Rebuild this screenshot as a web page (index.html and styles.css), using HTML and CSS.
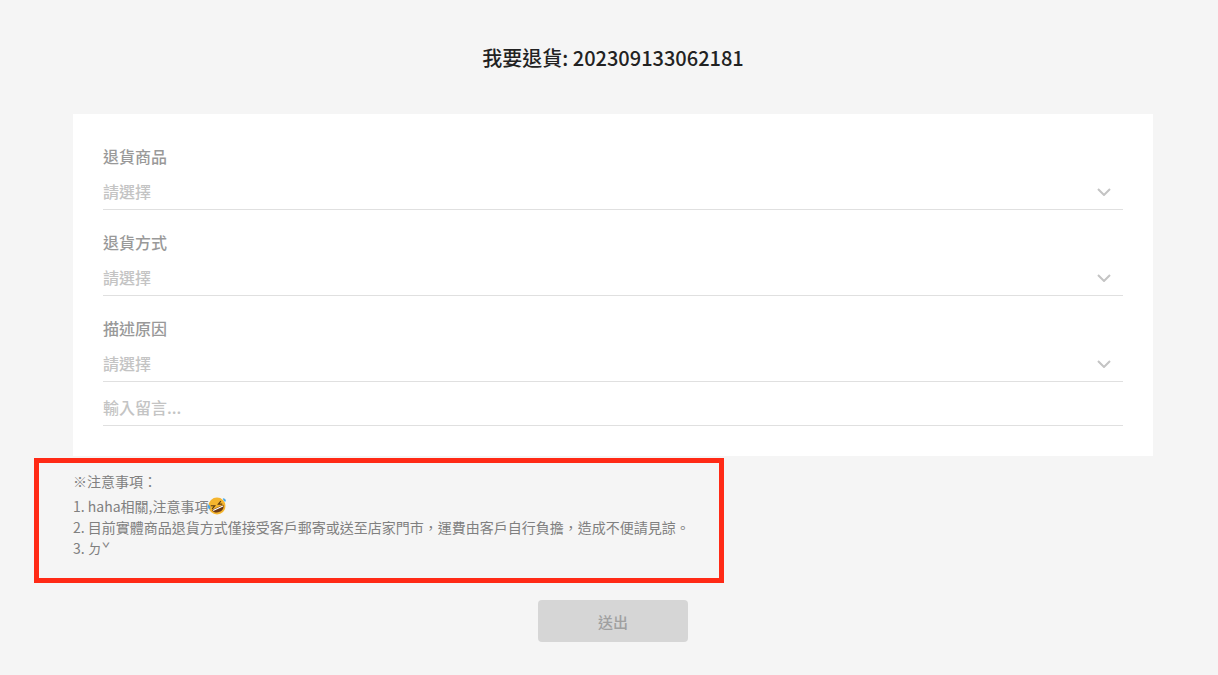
FILE: index.html
```html
<!DOCTYPE html>
<html lang="zh-TW">
<head>
    <meta charset="UTF-8">
    <meta name="viewport" content="width=device-width, initial-scale=1.0">
    <title>我要退貨</title>
    <link rel="stylesheet" href="styles.css">
</head>
<body>
    <div class="page">
        <h1 class="title">我要退貨: 202309133062181</h1>

        <form class="card">
            <div class="field">
                <div class="field-label">退貨商品</div>
                <div class="select">
                    <span>請選擇</span>
                    <svg class="chevron" viewBox="0 0 14 8"><path d="M1 1l6 6 6-6"/></svg>
                </div>
            </div>
            <div class="field">
                <div class="field-label">退貨方式</div>
                <div class="select">
                    <span>請選擇</span>
                    <svg class="chevron" viewBox="0 0 14 8"><path d="M1 1l6 6 6-6"/></svg>
                </div>
            </div>
            <div class="field">
                <div class="field-label">描述原因</div>
                <div class="select">
                    <span>請選擇</span>
                    <svg class="chevron" viewBox="0 0 14 8"><path d="M1 1l6 6 6-6"/></svg>
                </div>
            </div>
            <div class="message">輸入留言...</div>
        </form>

        <div class="notes">
            <div class="notes-title">※注意事項：</div>
            <div class="notes-line">1. haha相關,注意事項<svg class="emoji" viewBox="0 0 20 20">
                <circle cx="10" cy="10" r="9.400" fill="#f5b52e"/>
                <g transform="rotate(-25 10 10)">
                    <path d="M3.800 6.800l4 2-4 1.800M16.200 6.800l-4 2 4 1.800" fill="none" stroke="#5a3a12" stroke-width="1.300"/>
                    <path d="M3 11.600h14c-.5 3.600-3.400 5.600-7 5.600s-6.500-2-7-5.600z" fill="#6b3a16"/>
                    <path d="M4 12.100h12v1.300H4z" fill="#fff"/>
                </g>
                <path d="M.5 8c-1 2.500-.8 5 1 5.500 1.800 0 1.600-3-1-5.500zM16.500 1.500c2.500.2 3.800 1.800 3.200 3.300-1.200 1.200-3-.6-3.200-3.300z" fill="#4aa8e8"/>
            </svg></div>
            <div class="notes-line">2. 目前實體商品退貨方式僅接受客戶郵寄或送至店家門市，運費由客戶自行負擔，造成不便請見諒。</div>
            <div class="notes-line">3. ㄉˇ</div>
        </div>

        <button class="submit" type="button" disabled>送出</button>
    </div>

    <div class="highlight"></div>
</body>
</html>
```

FILE: styles.css
```css
* {
    box-sizing: border-box;
}

body {
    background-color: #f5f5f5;
    color: #222;
    font-family: "Noto Sans CJK TC", "Noto Sans", sans-serif;
    margin: 0;
    height: 675px;
    overflow: hidden;
    position: relative;
}

.page {
    width: 1080px;
    margin: 0 auto 0 73px;
    display: flex;
    flex-direction: column;
}

.title {
    margin: 44px 0 0;
    height: 70px;
    font-size: 20px;
    line-height: 28px;
    font-weight: 500;
    text-align: center;
    color: #222;
}

.card {
    background-color: #fff;
    height: 342px;
    padding: 29px 30px 0;
}

.field {
    margin-bottom: 19px;
}

.field:nth-child(3) {
    margin-bottom: 0;
}

.field-label {
    font-size: 16px;
    font-weight: 500;
    line-height: 26px;
    color: #999;
}

.select {
    height: 41px;
    padding-top: 9px;
    border-bottom: 1px solid #e0e0e0;
    display: flex;
    justify-content: space-between;
    font-size: 16px;
    font-weight: 500;
    line-height: 26px;
    color: #c4c4c4;
}

.chevron {
    width: 14px;
    height: 8px;
    margin: 10px 12px 0 0;
    fill: none;
    stroke: #c4c4c4;
    stroke-width: 2;
}

.message {
    height: 44px;
    padding-top: 12px;
    border-bottom: 1px solid #e0e0e0;
    font-size: 16px;
    font-weight: 500;
    line-height: 26px;
    color: #c4c4c4;
}

.notes {
    padding-top: 14px;
    height: 144px;
    font-size: 14px;
    color: #808080;
}

.notes-title {
    line-height: 22px;
    margin-bottom: 4px;
}

.notes-line {
    line-height: 21px;
    display: flex;
    align-items: center;
}

.emoji {
    width: 18px;
    height: 18px;
    margin-top: -2px;
}

.submit {
    align-self: center;
    width: 150px;
    height: 42px;
    border: 0;
    border-radius: 4px;
    background-color: #d6d6d6;
    color: #a0a0a0;
    font-family: inherit;
    font-size: 15px;
    font-weight: 500;
}

/* red annotation box drawn over the notes */
.highlight {
    position: absolute;
    left: 34px;
    top: 458px;
    width: 690px;
    height: 125px;
    border: 5px solid #ff2a16;
}
```
